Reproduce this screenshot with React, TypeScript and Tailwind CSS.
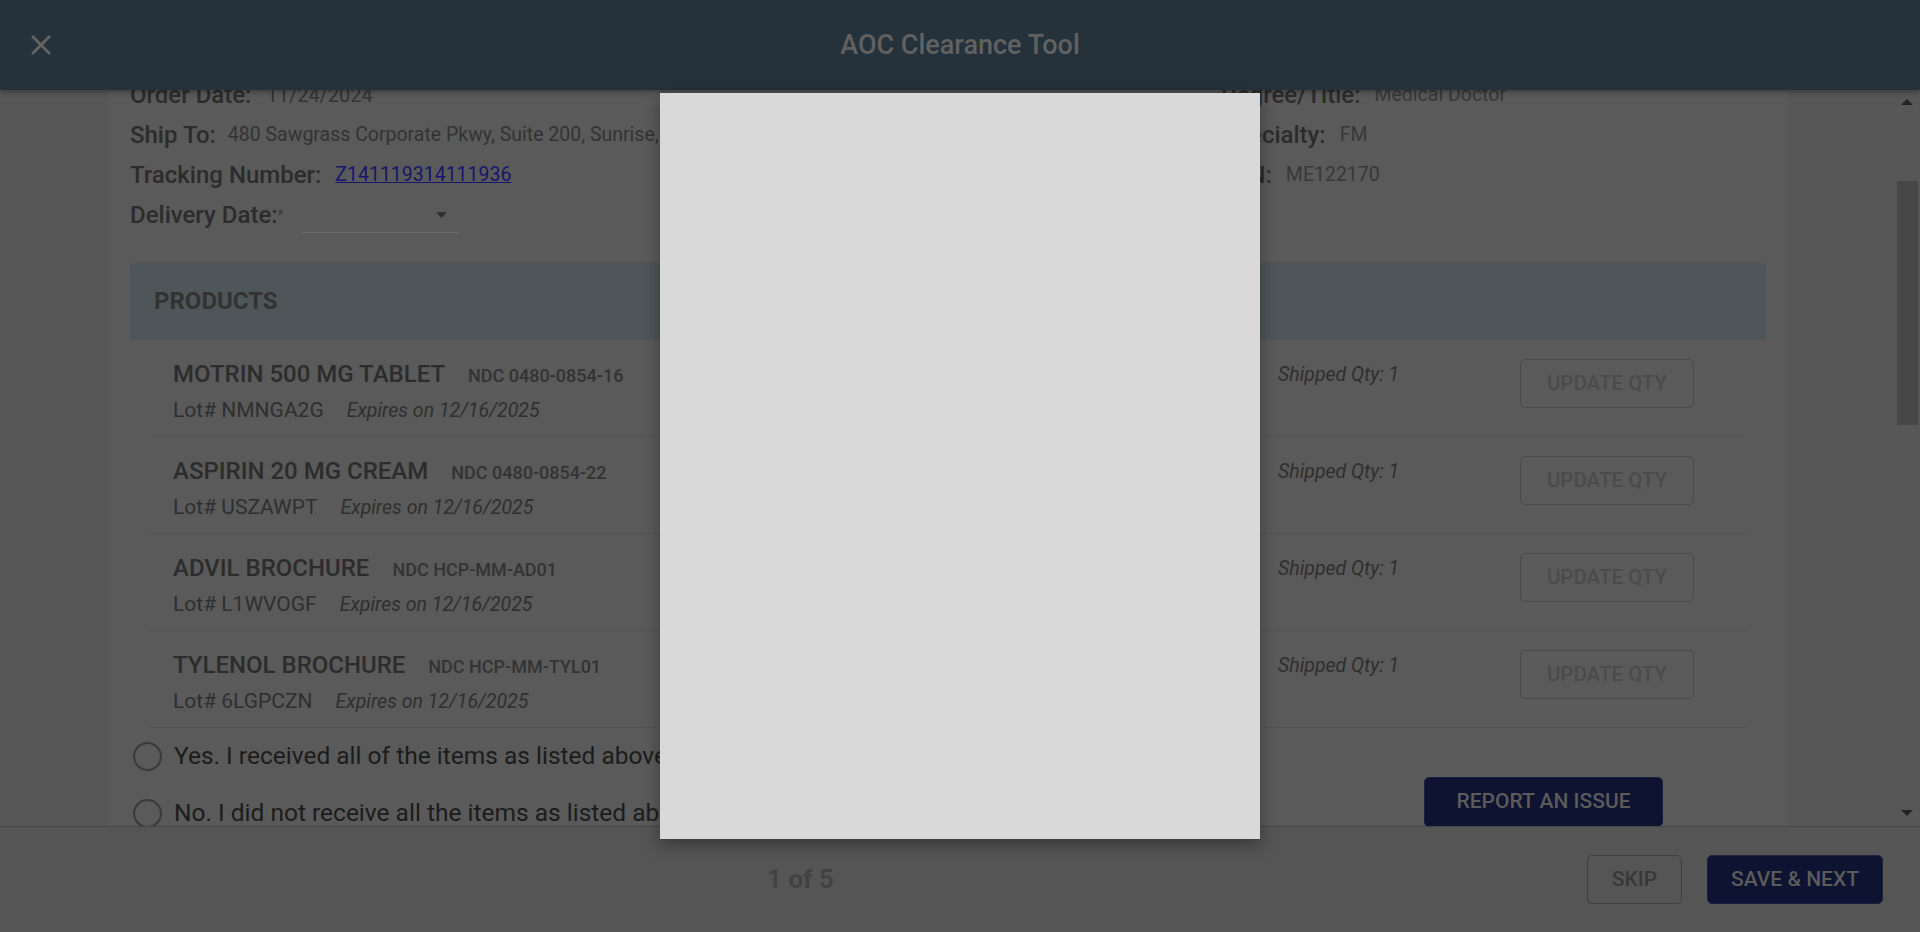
import React from 'react';

const products = [
  { name: 'MOTRIN 500 MG TABLET', ndc: 'NDC 0480-0854-16', lot: 'NMNGA2G' },
  { name: 'ASPIRIN 20 MG CREAM', ndc: 'NDC 0480-0854-22', lot: 'USZAWPT' },
  { name: 'ADVIL BROCHURE', ndc: 'NDC HCP-MM-AD01', lot: 'L1WVOGF' },
  { name: 'TYLENOL BROCHURE', ndc: 'NDC HCP-MM-TYL01', lot: '6LGPCZN' },
];

function InfoRow({ label, children }: { label: string; children: React.ReactNode }) {
  return (
    <div className="h-[40px] flex items-center">
      <span className="text-[24px] font-medium text-[#2c2c2c]">{label}</span>
      {children}
    </div>
  );
}

function Radio({ text }: { text: string }) {
  return (
    <label className="h-[57px] flex items-center pl-[3px]">
      <span className="w-[29px] h-[29px] rounded-full border-[2.5px] border-[#3a3a3a]" />
      <span className="ml-[12px] text-[24.5px] text-[#1c1c1c]">{text}</span>
    </label>
  );
}

export default function App() {
  return (
    <div className="w-[1920px] h-[932px] relative overflow-hidden bg-[#575757] flex flex-col font-['Roboto',sans-serif]">
      {/* header */}
      <header className="relative z-10 h-[90px] shrink-0 bg-[#25313b] shadow-[0_2px_6px_rgba(0,0,0,0.35)] grid grid-cols-[1fr_auto_1fr] items-center">
        <button className="ml-[24px] w-[34px] h-[34px] text-[#646464]">
          <svg viewBox="0 0 24 24" className="w-[34px] h-[34px]" fill="currentColor">
            <path d="M19 6.41 17.59 5 12 10.59 6.41 5 5 6.41 10.59 12 5 17.59 6.41 19 12 13.41 17.59 19 19 17.59 13.41 12z" />
          </svg>
        </button>
        <h1 className="text-[27px] font-medium text-[#616161]">AOC Clearance Tool</h1>
        <div />
      </header>

      {/* scroll area */}
      <div className="flex-1 min-h-0 flex overflow-hidden">
        <div className="w-[1897px] pl-[106px] pr-[107px]">
          <div className="h-full bg-[#5a5a5a] border-x border-[#535353] px-[23px] overflow-hidden">
            <div className="-mt-[15px]">
              <div className="flex">
                <div className="w-[1091px]">
                  <InfoRow label="Order Date:">
                    <span className="ml-[15px] text-[20px] text-[#333]">11/24/2024</span>
                  </InfoRow>
                  <InfoRow label="Ship To:">
                    <span className="ml-[12px] text-[19.5px] text-[#333]">480 Sawgrass Corporate Pkwy, Suite 200, Sunrise, FL 33325</span>
                  </InfoRow>
                  <InfoRow label="Tracking Number:">
                    <a className="ml-[14px] text-[19.5px] text-[#16166a] underline">Z141119314111936</a>
                  </InfoRow>
                  <InfoRow label="Delivery Date:">
                    <span className="text-[14px] text-[#3a3a3a] self-center">*</span>
                    <div className="ml-[19px] w-[156px] h-[36px] border-b border-[#6a6a6a] flex items-center justify-end pr-[12px]">
                      <svg viewBox="0 0 10 5" className="w-[11px] h-[6px]" fill="#2e2e2e">
                        <path d="M0 0h10L5 5z" />
                      </svg>
                    </div>
                  </InfoRow>
                </div>
                <div>
                  <InfoRow label="Degree/Title:">
                    <span className="ml-[14px] text-[19.5px] text-[#383838]">Medical Doctor</span>
                  </InfoRow>
                  <InfoRow label="Specialty:">
                    <span className="ml-[14px] text-[19.5px] text-[#383838]">FM</span>
                  </InfoRow>
                  <InfoRow label="SLN:">
                    <span className="ml-[14px] text-[19.5px] text-[#383838]">ME122170</span>
                  </InfoRow>
                </div>
              </div>

              {/* products */}
              <div className="mt-[27px]">
                <div className="h-[78px] bg-[#4f5659] rounded-t-[6px] flex items-center pl-[24px]">
                  <h2 className="text-[24px] font-bold text-[#323232]">PRODUCTS</h2>
                </div>
                {products.map((p) => (
                  <div key={p.lot} className="mx-[20px] h-[97px] border-b border-[#535353] flex items-start pl-[23px] pr-[51px]">
                    <div className="w-[1105px] pt-[16px]">
                      <div className="flex items-baseline gap-[23px] h-[28px]">
                        <span className="text-[24px] font-medium text-[#2c2c2c]">{p.name}</span>
                        <span className="text-[18px] font-medium text-[#333]">{p.ndc}</span>
                      </div>
                      <div className="flex items-baseline gap-[23px] mt-[11px] text-[21px] text-[#2f2f2f]">
                        <span>Lot# {p.lot}</span>
                        <span className="italic text-[19.5px]">Expires on 12/16/2025</span>
                      </div>
                    </div>
                    <div className="w-[242px] pt-[20px] text-[19.5px] italic text-[#2f2f2f]">Shipped Qty: 1</div>
                    <button className="mt-[19px] w-[174px] h-[49px] rounded-[5px] border border-[#4a4a4a] text-[20.5px] font-medium text-[#4b4b4b]">
                      UPDATE QTY
                    </button>
                  </div>
                ))}
              </div>

              {/* confirmation */}
              <div className="flex items-end">
                <div className="flex-1">
                  <Radio text="Yes. I received all of the items as listed above." />
                  <Radio text="No. I did not receive all the items as listed above." />
                </div>
                <button className="mr-[103px] mb-[15px] w-[239px] h-[50px] rounded-[5px] bg-[#0d1330] border border-[#1a2040] text-[21px] font-medium text-[#5b5b5b]">
                  REPORT AN ISSUE
                </button>
              </div>
            </div>
          </div>
        </div>
        {/* scrollbar */}
        <div className="w-[23px] relative">
          <div className="absolute top-[9px] left-[4px] w-0 h-0 border-x-[6px] border-x-transparent border-b-[6px] border-b-[#222]" />
          <div className="absolute top-[91px] left-0 w-[21px] h-[244px] bg-[#474747]" />
          <div className="absolute bottom-[10px] left-[4px] w-0 h-0 border-x-[6px] border-x-transparent border-t-[6px] border-t-[#222]" />
        </div>
      </div>

      {/* footer */}
      <footer className="h-[106px] shrink-0 bg-[#555555] border-t border-[#474747] flex items-center">
        <span className="ml-[767px] text-[26px] font-bold text-[#424242]">1 of 5</span>
        <div className="ml-auto mr-[37px] flex gap-[25px]">
          <button className="w-[95px] h-[49px] rounded-[5px] border border-[#3e3e3e] text-[21px] font-medium text-[#383838]">SKIP</button>
          <button className="w-[176px] h-[49px] rounded-[5px] bg-[#0d1330] border border-[#1a2040] text-[21px] font-medium text-[#5b5b5b]">SAVE &amp; NEXT</button>
        </div>
      </footer>

      {/* popover panel */}
      <div className="absolute z-20 left-[660px] top-[93px] w-[600px] h-[746px] bg-[#d9d9d9] shadow-[0_6px_16px_rgba(0,0,0,0.35)]" />
    </div>
  );
}
